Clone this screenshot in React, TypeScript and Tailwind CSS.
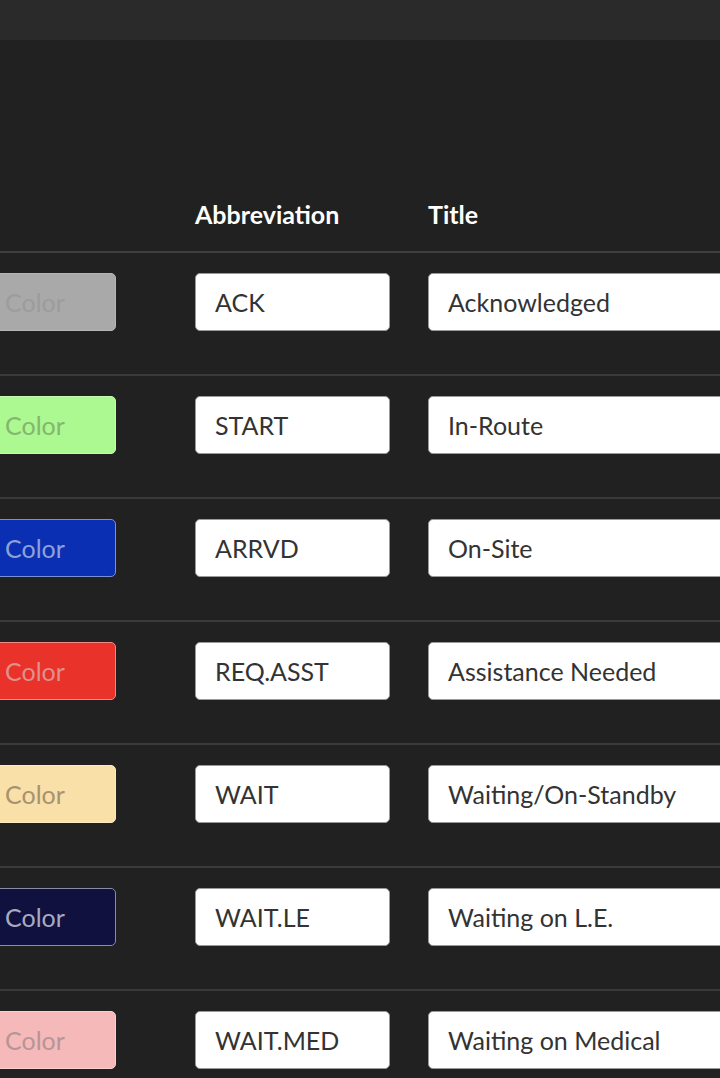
const rows = [
  { bg: "bg-[#a9a9a9]", border: "border-[#b5b5b5]", text: "text-[#9c9c9c]", abbr: "ACK", title: "Acknowledged" },
  { bg: "bg-[#acf891]", border: "border-[#c4f9b0]", text: "text-[#83b66f]", abbr: "START", title: "In-Route" },
  { bg: "bg-[#0b2fb3]", border: "border-[#7a8ed3]", text: "text-[#8fa1d8]", abbr: "ARRVD", title: "On-Site" },
  { bg: "bg-[#e8322a]", border: "border-[#ee8a83]", text: "text-[#e0918b]", abbr: "REQ.ASST", title: "Assistance Needed" },
  { bg: "bg-[#f9dfa8]", border: "border-[#fbe9c4]", text: "text-[#a6936f]", abbr: "WAIT", title: "Waiting/On-Standby" },
  { bg: "bg-[#10113f]", border: "border-[#8a8ba6]", text: "text-[#a9aac0]", abbr: "WAIT.LE", title: "Waiting on L.E." },
  { bg: "bg-[#f5b9ba]", border: "border-[#f8cfcf]", text: "text-[#b59596]", abbr: "WAIT.MED", title: "Waiting on Medical" },
];

export default function App() {
  return (
    <div
      className="h-[1078px] w-[720px] overflow-hidden bg-[#212121]"
      style={{ fontFamily: "Lato, 'Open Sans', sans-serif" }}
    >
      <div className="h-10 bg-[#2a2a2a]" />

      <div className="-ml-[15px] w-[900px] pt-[159px]">
        <div className="flex border-b-2 border-[#3e3e3e] pb-[22px] text-[25px] leading-[30px] font-bold text-white">
          <div className="w-[131px]" />
          <div className="ml-[79px] w-[195px]">Abbreviation</div>
          <div className="ml-[38px]">Title</div>
        </div>

        {rows.map((r) => (
          <div
            key={r.abbr}
            className="flex border-b-2 border-[#3a3a3a] pt-[20px] pb-[43px]"
          >
            <div
              className={`flex h-[58px] w-[131px] items-center rounded-[5px] border pt-[1px] pl-[19px] text-[25px] ${r.bg} ${r.border} ${r.text}`}
            >
              Color
            </div>
            <div className="ml-[79px] flex h-[58px] w-[195px] items-center rounded-[5px] border border-[#9a9a9a] bg-white pt-[1px] pl-[19px] text-[25px] text-[#333333]">
              {r.abbr}
            </div>
            <div className="ml-[38px] flex h-[58px] w-[330px] items-center rounded-[5px] border border-[#9a9a9a] bg-white pt-[1px] pl-[19px] text-[25px] text-[#333333]">
              {r.title}
            </div>
          </div>
        ))}
      </div>
    </div>
  );
}
